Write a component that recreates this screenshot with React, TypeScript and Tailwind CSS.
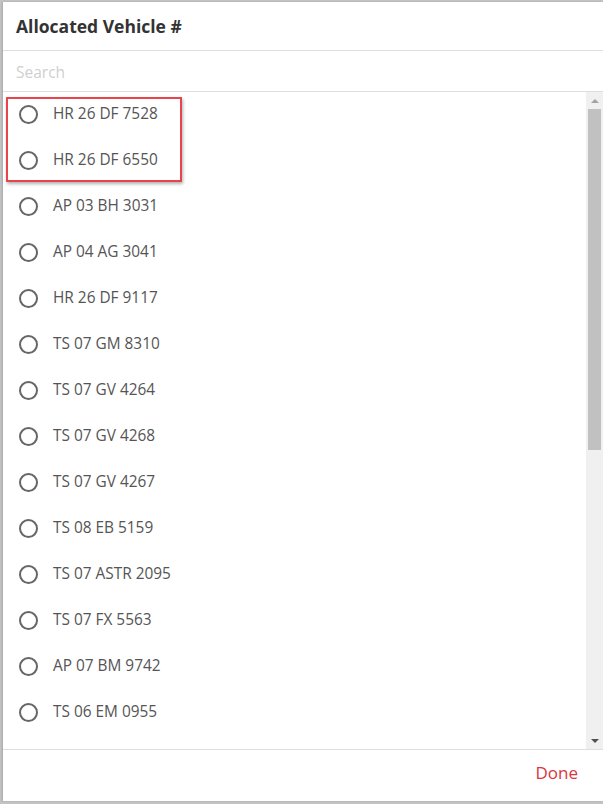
import React from "react"

const vehicles = [
  "HR 26 DF 7528",
  "HR 26 DF 6550",
  "AP 03 BH 3031",
  "AP 04 AG 3041",
  "HR 26 DF 9117",
  "TS 07 GM 8310",
  "TS 07 GV 4264",
  "TS 07 GV 4268",
  "TS 07 GV 4267",
  "TS 08 EB 5159",
  "TS 07 ASTR 2095",
  "TS 07 FX 5563",
  "AP 07 BM 9742",
  "TS 06 EM 0955",
]

const Radio = () => (
  <div className="size-[19px] rounded-full border-2 border-[#666] shrink-0" />
)

export default function App() {
  return (
    <div
      className="w-[603px] h-[804px] bg-[#c4c4c4] pt-[2px] pl-[3px] pb-[3px] overflow-hidden"
      style={{ fontFamily: '"Open Sans", "Noto Sans", sans-serif' }}
    >
      <div className="relative h-full bg-white flex flex-col shadow-[-1px_0_2px_rgba(0,0,0,0.15)]">
        {/* header */}
        <div className="h-[49px] flex items-center pl-[13px] pt-[1px] border-b border-[#dedede] shrink-0">
          <h1 className="text-[17.5px] font-bold text-[#333]">Allocated Vehicle #</h1>
        </div>

        {/* search */}
        <div className="h-[41px] flex items-center pl-[13px] pt-[4px] border-b border-[#dedede] shrink-0">
          <input
            className="w-full outline-none text-[15.5px] text-[#333] placeholder:text-[#cfcfcf] bg-transparent"
            placeholder="Search"
          />
        </div>

        {/* list */}
        <div className="flex flex-1 min-h-0 border-b border-[#dedede]">
          <div className="flex-1 overflow-hidden">
            <div className="-mt-[1px]">
              {vehicles.map((v) => (
                <div key={v} className="h-[46px] flex items-center pl-[16px] gap-[15px]">
                  <Radio />
                  <span className="text-[15.4px] text-[#555]">{v}</span>
                </div>
              ))}
              <div className="h-[46px] flex items-center pl-[16px]">
                <Radio />
              </div>
            </div>
          </div>

          {/* scrollbar */}
          <div className="w-[17px] bg-[#f0f0f0] flex flex-col items-center shrink-0">
            <div className="h-[17px] flex items-center justify-center">
              <div className="w-0 h-0 border-l-[4px] border-r-[4px] border-b-[4px] border-l-transparent border-r-transparent border-b-[#a3a3a3]" />
            </div>
            <div className="w-[13px] h-[341px] bg-[#c1c1c1]" />
            <div className="flex-1" />
            <div className="h-[17px] flex items-center justify-center">
              <div className="w-0 h-0 border-l-[4px] border-r-[4px] border-t-[4px] border-l-transparent border-r-transparent border-t-[#505050]" />
            </div>
          </div>
        </div>

        {/* footer */}
        <div className="h-[51px] flex items-center justify-end pr-[25px] pb-[5px] shrink-0">
          <button className="text-[17px] text-[#d9363e]">Done</button>
        </div>

        {/* highlight annotation */}
        <div className="absolute left-[3px] top-[95px] w-[176px] h-[85px] border-2 border-[#e8454a] shadow-[1px_2px_3px_rgba(0,0,0,0.3)] pointer-events-none" />
      </div>
    </div>
  )
}
